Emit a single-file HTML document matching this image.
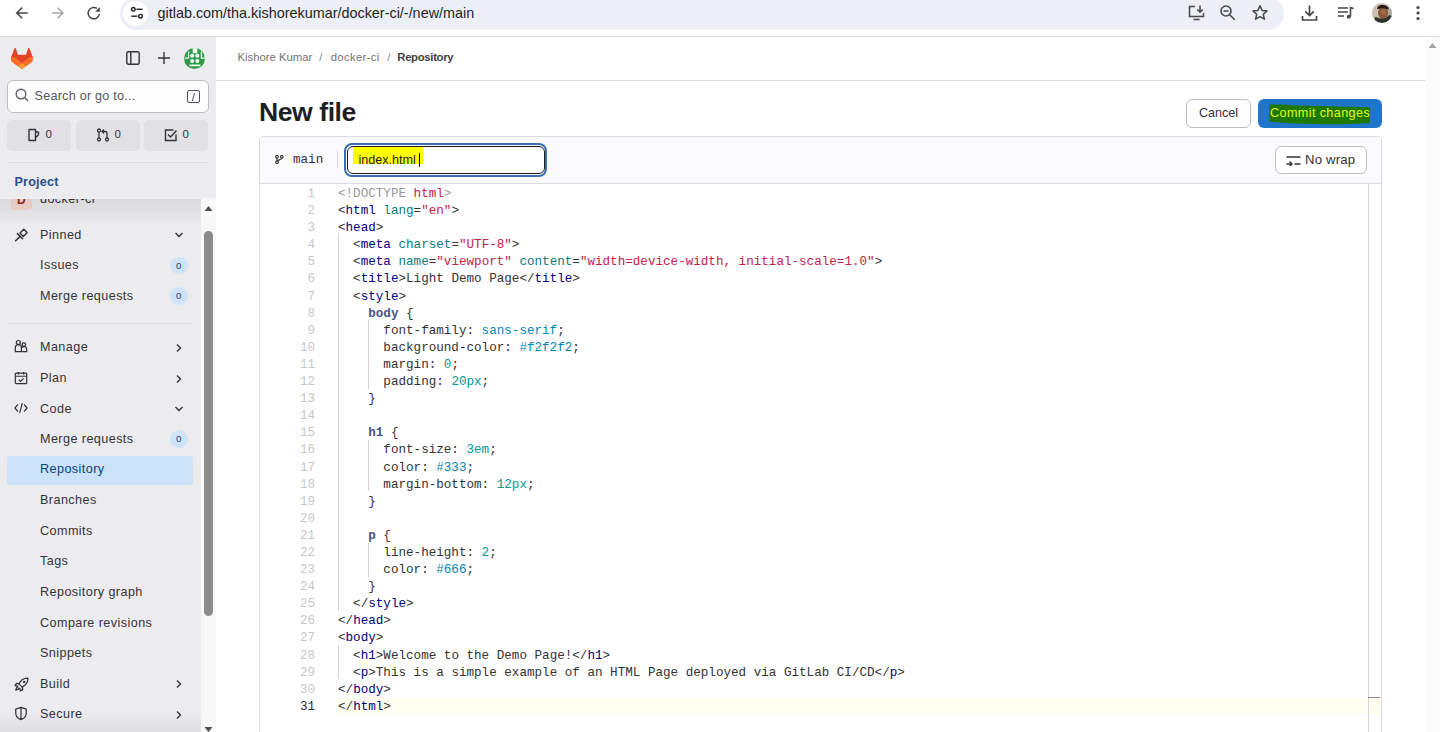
<!DOCTYPE html>
<html><head><meta charset="utf-8">
<style>
*{box-sizing:border-box;margin:0;padding:0}
html,body{width:1440px;height:732px;overflow:hidden;background:#fff;font-family:"Liberation Sans",sans-serif;color:#333238}
.a{position:absolute}
svg{display:block}
/* chrome */
#chrome{left:0;top:0;width:1440px;height:37px;background:#fff;border-bottom:1px solid #dadce0}
#omni{left:120px;top:-3px;width:1164px;height:33px;border-radius:16.5px;background:#eceff5}
#tune{left:123px;top:1px;width:25px;height:25px;border-radius:50%;background:#fff}
#url{left:157.5px;top:5px;font-size:14.4px;color:#1f1f1f;white-space:nowrap;line-height:17px}
/* sidebar */
#sb{left:0;top:37px;width:216px;height:695px;background:#ececef}
.cnt{top:120px;width:64px;height:30.5px;border-radius:5px;background:#e1e1e5}
.cnt span{position:absolute;left:38.5px;top:8px;font-size:11.5px;color:#333238}
.it{left:40px;font-size:12.6px;letter-spacing:.43px;color:#333238;white-space:nowrap;line-height:15px}
.bdg{left:170px;width:17.5px;height:17.5px;border-radius:9px;background:#cfe4f9;color:#2a3f66;font-size:9.8px;text-align:center;line-height:18px}
.chev{left:174px}
.ico{left:14px}
/* main */
#bc{left:237.5px;top:51px;font-size:11.3px;color:#737278;white-space:nowrap;line-height:13px}
#bc b{color:#434248;font-weight:bold}
#bc .sl{color:#89888d}
#hdrline{left:216px;top:80px;width:1209px;height:1px;background:#dcdcde}
#title{left:259px;top:96.5px;font-size:26.6px;font-weight:bold;color:#1f1e24;letter-spacing:-.45px;white-space:nowrap;line-height:30px}
.btn{height:28.5px;border-radius:6px;font-size:12.6px;white-space:nowrap}
#card{left:259px;top:136px;width:1123px;height:620px;border:1px solid #dcdcde;border-radius:4px;background:#fff}
#cardhdr{left:260px;top:137px;width:1121px;height:47px;background:#fbfafd;border-bottom:1px solid #dcdcde;border-radius:3px 3px 0 0}
.code{position:absolute;left:338px;font-family:"Liberation Mono",monospace;font-size:12.6px;white-space:pre;line-height:17.1px;color:#333}
.ln{position:absolute;left:270px;width:45px;text-align:right;font-family:"Liberation Mono",monospace;font-size:12.6px;line-height:17.1px;color:#c8c8c8}
.t{color:#000080}.n{color:#008080}.s{color:#c4214c}.p{color:#333}.m{color:#999}.c{color:#445588;font-weight:bold}.v{color:#0086b3}.num{color:#009999}
</style></head><body>

<!-- browser chrome -->
<div id="chrome" class="a"></div>
<div class="a" style="left:14px;top:5px">
<svg width="16" height="16" viewBox="0 0 16 16"><path d="M13.8 7.9H2.6M8.2 2.5 2.7 7.9l5.5 5.4" fill="none" stroke="#474747" stroke-width="1.5"/></svg></div>
<div class="a" style="left:49px;top:5px">
<svg width="16" height="16" viewBox="0 0 16 16"><path d="M3.2 7.9h10.7M8.7 2.7l5.2 5.2-5.2 5.3" fill="none" stroke="#a8a8a8" stroke-width="1.5"/></svg></div>
<div class="a" style="left:86px;top:5px"><svg width="16" height="16" viewBox="0 0 16 16"><path d="M13.4 9.2A5.7 5.7 0 1 1 11 3.4" fill="none" stroke="#474747" stroke-width="1.5"/><path d="M13.9 6.7V1.9L9.1 6.7z" fill="#474747"/></svg></div>
<div id="omni" class="a"></div>
<div id="tune" class="a"></div>
<div class="a" style="left:130px;top:6px">
<svg width="14" height="14" viewBox="0 0 14 14"><circle cx="3.3" cy="3.3" r="1.8" fill="none" stroke="#1f1f1f" stroke-width="1.4"/><path d="M6.5 3.3h6" stroke="#1f1f1f" stroke-width="1.4"/><circle cx="10.5" cy="10.2" r="1.8" fill="none" stroke="#1f1f1f" stroke-width="1.4"/><path d="M1.3 10.2h6" stroke="#1f1f1f" stroke-width="1.4"/></svg></div>
<div id="url" class="a">gitlab.com/tha.kishorekumar/docker-ci/-/new/main</div>
<!-- right chrome icons -->
<div class="a" style="left:1187px;top:4px">
<svg width="19" height="18" viewBox="0 0 19 18"><path d="M8 2.5H2.5v10h14V9" fill="none" stroke="#474747" stroke-width="1.5"/><path d="M6.5 15.5h6" stroke="#474747" stroke-width="1.6"/><path d="M13 1.5v6.5M10.3 5.5 13 8.2l2.7-2.7" fill="none" stroke="#474747" stroke-width="1.5"/></svg></div>
<div class="a" style="left:1219px;top:4px">
<svg width="18" height="18" viewBox="0 0 18 18"><circle cx="7" cy="7" r="5" fill="none" stroke="#474747" stroke-width="1.6"/><path d="M4.5 7h5M10.7 10.7l5 5" stroke="#474747" stroke-width="1.6"/></svg></div>
<div class="a" style="left:1251px;top:4px">
<svg width="18" height="18" viewBox="0 0 18 18"><path d="M9 1.8l2.1 4.6 5 .5-3.8 3.4 1.1 4.9L9 12.7l-4.4 2.5 1.1-4.9L1.9 6.9l5-.5z" fill="none" stroke="#474747" stroke-width="1.5" stroke-linejoin="round"/></svg></div>
<div class="a" style="left:1300px;top:4px">
<svg width="19" height="18" viewBox="0 0 19 18"><path d="M9.5 1.5v10M5.2 7.3l4.3 4.3 4.3-4.3M2.5 12v4h14v-4" fill="none" stroke="#474747" stroke-width="1.7"/></svg></div>
<div class="a" style="left:1337px;top:4px">
<svg width="18" height="18" viewBox="0 0 18 18"><path d="M1 4h10M1 8h10M1 12h6" stroke="#474747" stroke-width="1.6"/><path d="M13.5 12.5V3.5l3 1" fill="none" stroke="#474747" stroke-width="1.6"/><circle cx="11.8" cy="12.8" r="2" fill="#474747"/></svg></div>
<div class="a" style="left:1372px;top:3px;width:20px;height:20px;border-radius:50%;overflow:hidden;background:#c9c4be">
<svg width="20" height="20" viewBox="0 0 20 20"><rect width="20" height="20" fill="#d8d2cc"/><path d="M0 0h7v20H0z" fill="#cdbfb2"/><path d="M14 6h6v14h-6z" fill="#a9aca0"/><ellipse cx="11" cy="10" rx="5" ry="6.5" fill="#8a5a3a"/><path d="M5 5.5C6 2 9 1.5 12 2s4.5 2 5 4l-2 .5C13 5 9 5 6 6z" fill="#2a1c14"/><path d="M3 14c2 0 4 1 6 2l5-1 3-3 3 1v7H2z" fill="#2e3428"/><ellipse cx="11.5" cy="9" rx="2.5" ry="3" fill="#a06a44"/></svg></div>
<div class="a" style="left:1416px;top:5px">
<svg width="4" height="16" viewBox="0 0 4 16"><circle cx="2" cy="2.5" r="1.6" fill="#474747"/><circle cx="2" cy="8" r="1.6" fill="#474747"/><circle cx="2" cy="13.5" r="1.6" fill="#474747"/></svg></div>

<!-- sidebar -->
<div id="sb" class="a"></div>
<!-- sidebar scroll area items -->
<div class="a" style="left:10.5px;top:190px;width:21.5px;height:20px;border-radius:4px;background:#f6d9d3;color:#9e2a14;font-size:12px;font-weight:bold;text-align:center;line-height:20px">D</div>
<div class="it a" style="top:192px">docker-ci</div>

<div class="ico a" style="top:226px"><svg width="16" height="16" viewBox="0 0 16 16"><path d="M9.8 3.3 13.2 6.6 9.4 10.4 6 7z" fill="none" stroke="#333238" stroke-width="1.4" stroke-linejoin="round"/><path d="M3.4 7.6l5.2 5.2M6.2 10.4 1.6 14.8" fill="none" stroke="#333238" stroke-width="1.5" stroke-linecap="round"/></svg></div>
<div class="it a" style="top:228px">Pinned</div>
<div class="chev a" style="top:231px"><svg width="10" height="8" viewBox="0 0 10 8"><path d="M1.5 2 5 5.5 8.5 2" fill="none" stroke="#333238" stroke-width="1.4"/></svg></div>
<div class="it a" style="top:257.5px">Issues</div><div class="bdg a" style="top:256.5px">0</div>
<div class="it a" style="top:289px">Merge requests</div><div class="bdg a" style="top:287px">0</div>
<div class="a" style="left:7px;top:323px;width:186px;height:1px;background:#dcdcde"></div>

<div class="ico a" style="top:339px"><svg width="14" height="14" viewBox="0 0 16 16"><circle cx="5" cy="4" r="2.3" fill="none" stroke="#333238" stroke-width="1.4"/><circle cx="11.3" cy="6.3" r="2" fill="none" stroke="#333238" stroke-width="1.4"/><path d="M1.5 14.5V10a3.5 3.5 0 0 1 7 0v4.5zM8.5 14.5h6V11.5a3 3 0 0 0-5.5-1.5" fill="none" stroke="#333238" stroke-width="1.4"/></svg></div>
<div class="it a" style="top:339.5px">Manage</div>
<div class="chev a" style="top:343px"><svg width="8" height="10" viewBox="0 0 8 10"><path d="M3 1.5 6.5 5 3 8.5" fill="none" stroke="#333238" stroke-width="1.4"/></svg></div>

<div class="ico a" style="top:370.5px"><svg width="14" height="14" viewBox="0 0 16 16"><rect x="1.5" y="2.5" width="13" height="12" rx="1" fill="none" stroke="#333238" stroke-width="1.4"/><path d="M1.5 6h13M5 1v3M11 1v3M5.5 10l2 2 3.5-3.5" fill="none" stroke="#333238" stroke-width="1.4"/></svg></div>
<div class="it a" style="top:371px">Plan</div>
<div class="chev a" style="top:373.5px"><svg width="8" height="10" viewBox="0 0 8 10"><path d="M3 1.5 6.5 5 3 8.5" fill="none" stroke="#333238" stroke-width="1.4"/></svg></div>

<div class="ico a" style="top:401px"><svg width="14" height="14" viewBox="0 0 16 16"><path d="M4.5 4 1 8l3.5 4M11.5 4 15 8l-3.5 4M9.5 2.5l-3 11" fill="none" stroke="#333238" stroke-width="1.4"/></svg></div>
<div class="it a" style="top:401.5px">Code</div>
<div class="chev a" style="top:404.5px"><svg width="10" height="8" viewBox="0 0 10 8"><path d="M1.5 2 5 5.5 8.5 2" fill="none" stroke="#333238" stroke-width="1.4"/></svg></div>

<div class="it a" style="top:432px">Merge requests</div><div class="bdg a" style="top:430px">0</div>
<div class="a" style="left:7px;top:456px;width:186px;height:28.7px;border-radius:2.5px;background:#cbe2f9"></div>
<div class="it a" style="top:462px;color:#0b3e7a">Repository</div>
<div class="it a" style="top:493px">Branches</div>
<div class="it a" style="top:523.5px">Commits</div>
<div class="it a" style="top:553.5px">Tags</div>
<div class="it a" style="top:585px">Repository graph</div>
<div class="it a" style="top:616px">Compare revisions</div>
<div class="it a" style="top:646px">Snippets</div>

<div class="ico a" style="top:676.5px"><svg width="15" height="15" viewBox="0 0 16 16"><path d="M14.8 1.2C10.5 1 7.3 3.3 5.2 7.3l3.5 3.5c4-2.1 6.3-5.3 6.1-9.6z" fill="none" stroke="#333238" stroke-width="1.4" stroke-linejoin="round"/><path d="M5.4 7 2.6 6.8 1.2 9.2l3 .6M9 10.6l.2 2.8-2.4 1.4-.6-3" fill="none" stroke="#333238" stroke-width="1.4" stroke-linejoin="round"/><path d="M4.6 10.3c-1.3.3-2.3 1.4-2.6 3.7 2.3-.3 3.4-1.3 3.7-2.6" fill="none" stroke="#333238" stroke-width="1.4" stroke-linejoin="round"/><circle cx="10.8" cy="5.2" r="1.3" fill="#333238"/></svg></div>
<div class="it a" style="top:677px">Build</div>
<div class="chev a" style="top:679px"><svg width="8" height="10" viewBox="0 0 8 10"><path d="M3 1.5 6.5 5 3 8.5" fill="none" stroke="#333238" stroke-width="1.4"/></svg></div>
<div class="ico a" style="top:706px"><svg width="14" height="15" viewBox="0 0 16 17"><path d="M8 1.5 14 3.5V8c0 3.5-2.5 6.3-6 7.5C4.5 14.3 2 11.5 2 8V3.5zM8 1.5v14" fill="none" stroke="#333238" stroke-width="1.4" stroke-linejoin="round"/></svg></div>
<div class="it a" style="top:706.5px">Secure</div>
<div class="chev a" style="top:709.5px"><svg width="8" height="10" viewBox="0 0 8 10"><path d="M3 1.5 6.5 5 3 8.5" fill="none" stroke="#333238" stroke-width="1.4"/></svg></div>

<div class="a" style="left:0;top:712px;width:201px;height:20px;background:linear-gradient(rgba(0,0,0,0),rgba(0,0,0,.06))"></div>
<!-- sidebar scrollbar -->
<div class="a" style="left:201px;top:199px;width:15px;height:533px;background:#f8f8f8"></div>
<div class="a" style="left:204px;top:205px"><svg width="9" height="7" viewBox="0 0 9 7"><path d="M4.5 1 8.5 6h-8z" fill="#505050"/></svg></div>
<div class="a" style="left:204px;top:231px;width:9px;height:385px;border-radius:4.5px;background:#8b8b8b"></div>
<div class="a" style="left:204px;top:726px"><svg width="9" height="7" viewBox="0 0 9 7"><path d="M4.5 6 8.5 1h-8z" fill="#505050"/></svg></div>

<!-- sticky sidebar header -->
<div class="a" style="left:0;top:199px;width:201px;height:26px;background:linear-gradient(rgba(0,0,0,.075),rgba(0,0,0,.05) 45%,rgba(0,0,0,0))"></div>
<div class="a" style="left:0;top:37px;width:216px;height:162px;background:#ececef"></div>
<div class="a" style="left:11px;top:48px"><svg width="22" height="21" viewBox="0 0 25 24"><path fill="#E24329" d="m24.507 9.5-.034-.09L21.082.562a.896.896 0 0 0-1.694.091l-2.29 7.01H7.825L5.535.653a.898.898 0 0 0-1.694-.09L.451 9.411.416 9.5a6.297 6.297 0 0 0 2.09 7.278l.012.01.03.022 5.16 3.867 2.56 1.935 1.554 1.176a1.051 1.051 0 0 0 1.268 0l1.555-1.176 2.56-1.935 5.197-3.89.014-.01A6.297 6.297 0 0 0 24.507 9.5Z"/><path fill="#FC6D26" d="m24.507 9.5-.034-.09a11.44 11.44 0 0 0-4.56 2.051l-7.447 5.632 4.742 3.584 5.197-3.89.014-.01A6.297 6.297 0 0 0 24.507 9.5Z"/><path fill="#FCA326" d="m7.707 20.677 2.56 1.935 1.555 1.176a1.051 1.051 0 0 0 1.268 0l1.555-1.176 2.56-1.935-4.743-3.584-4.755 3.584Z"/><path fill="#FC6D26" d="M5.01 11.461a11.43 11.43 0 0 0-4.56-2.05L.416 9.5a6.297 6.297 0 0 0 2.09 7.278l.012.01.03.022 5.16 3.867 4.745-3.584-7.444-5.632Z"/></svg></div>
<div class="a" style="left:126px;top:51px"><svg width="14" height="14" viewBox="0 0 14 14"><rect x=".8" y=".8" width="12.4" height="12.4" rx="1.5" fill="none" stroke="#333238" stroke-width="1.4"/><path d="M4.8 1v12" stroke="#333238" stroke-width="1.4"/></svg></div>
<div class="a" style="left:157px;top:51px"><svg width="14" height="14" viewBox="0 0 14 14"><path d="M7 1v12M1 7h12" stroke="#333238" stroke-width="1.4"/></svg></div>
<div class="a" style="left:183.5px;top:47.5px;width:21.5px;height:21.5px;border-radius:50%;overflow:hidden;background:#fff">
<svg width="22" height="22" viewBox="0 0 22 22"><rect width="22" height="22" fill="#2f9b4a"/><path d="M8.7 0h4.6v5.2H8.7z" fill="#f2fbf2"/><path d="M3.9 3.4h1.3v7.4H1v-1.3h2.9z" fill="#f2fbf2"/><path d="M16.8 3.4h1.3v6.1H21v1.3h-4.2z" fill="#f2fbf2"/><circle cx="8.2" cy="7.8" r="2" fill="#f2fbf2"/><circle cx="13.3" cy="7.8" r="2" fill="#f2fbf2"/><circle cx="8.2" cy="12.9" r="2" fill="#f2fbf2"/><circle cx="13.3" cy="12.9" r="2" fill="#f2fbf2"/><path d="M5.4 16.4h11v1.9h-11z" fill="#f2fbf2"/></svg></div>
<div class="a" style="left:7px;top:80px;width:201.5px;height:32.5px;border-radius:6px;background:#fdfdfe;border:1px solid #bfbfc3"></div>
<div class="a" style="left:15px;top:88px"><svg width="14" height="14" viewBox="0 0 14 14"><circle cx="6" cy="6" r="4.8" fill="none" stroke="#626168" stroke-width="1.4"/><path d="M9.5 9.5 13 13" stroke="#626168" stroke-width="1.5"/></svg></div>
<div class="a" style="left:34.5px;top:89px;font-size:12.6px;letter-spacing:.25px;color:#57565c;white-space:nowrap;line-height:14px">Search or go to...</div>
<div class="a" style="left:187px;top:90px;width:12.5px;height:12.5px;border:1.3px solid #535158;border-radius:2px"></div>
<div class="a" style="left:192.5px;top:92.5px;width:1.3px;height:7.5px;background:#535158;transform:rotate(15deg)"></div>

<div class="cnt a" style="left:7px"><svg class="a" style="left:20px;top:7.5px" width="14" height="14" viewBox="0 0 14 14"><path d="M2 1.5h6.5v11H2zM8.5 3.5l3 .8v2.5l-3 3" fill="none" stroke="#333238" stroke-width="1.4" stroke-linejoin="round"/></svg><span>0</span></div>
<div class="cnt a" style="left:76px"><svg class="a" style="left:20px;top:7.5px" width="14" height="14" viewBox="0 0 14 14"><circle cx="3" cy="2.5" r="1.5" fill="none" stroke="#333238" stroke-width="1.3"/><circle cx="3" cy="11.5" r="1.5" fill="none" stroke="#333238" stroke-width="1.3"/><circle cx="11" cy="11.5" r="1.5" fill="none" stroke="#333238" stroke-width="1.3"/><path d="M3 4v6M11 10V5.5a2 2 0 0 0-2-2H6.5M8 1.5 6 3.5l2 2" fill="none" stroke="#333238" stroke-width="1.3"/></svg><span>0</span></div>
<div class="cnt a" style="left:144px"><svg class="a" style="left:20px;top:7.5px" width="14" height="14" viewBox="0 0 14 14"><path d="M12 6.5v6H1.5V2h8" fill="none" stroke="#333238" stroke-width="1.4"/><path d="M4 6.5l2.5 2.5 6-6.5" fill="none" stroke="#333238" stroke-width="1.4"/></svg><span>0</span></div>
<div class="a" style="left:7px;top:162px;width:201px;height:1px;background:#dcdcde"></div>
<div class="a" style="left:0;top:197px;width:216px;height:2px;background:#f0eff3"></div>
<div class="a" style="left:14.5px;top:175px;font-size:12.6px;font-weight:bold;color:#2a4f88;letter-spacing:.2px;line-height:14px">Project</div>

<!-- main -->
<div id="bc" class="a">Kishore Kumar<span class="sl" style="margin:0 8.3px 0 7px">/</span><span style="letter-spacing:.35px">docker-ci</span><span class="sl" style="margin:0 7px 0 7.5px">/</span><b style="letter-spacing:-.3px">Repository</b></div>
<div id="hdrline" class="a"></div>
<div id="title" class="a">New file</div>
<div class="btn a" style="left:1186px;top:99px;width:65px;border:1px solid #bfbfc3;background:#fff;color:#333238;text-align:center;line-height:26.5px">Cancel</div>
<div class="btn a" style="left:1258px;top:99px;width:124px;background:#1f75cb"></div>
<svg class="a" style="left:1268px;top:104px" width="104" height="22" viewBox="0 0 104 22"><path d="M1 .5C12 .3 22 1 32 1.5L102 3.3V19.3C90 19.5 75 20.5 55 20.3 35 20 20 19.5 1.5 17.5z" fill="#1f7800"/></svg>
<div class="a" style="left:1270px;top:106px;font-size:12.6px;letter-spacing:.4px;color:#dcff12;white-space:nowrap;line-height:14px">Commit changes</div>

<div id="card" class="a"></div>
<div id="cardhdr" class="a"></div>
<div class="a" style="left:274.5px;top:155px"><svg width="9" height="9" viewBox="0 0 9 9"><circle cx="2" cy="1.8" r="1.3" fill="none" stroke="#333238" stroke-width="1.1"/><circle cx="6.8" cy="1.8" r="1.3" fill="none" stroke="#333238" stroke-width="1.1"/><circle cx="2" cy="7.2" r="1.3" fill="none" stroke="#333238" stroke-width="1.1"/><path d="M2 3.1v2.8M6.8 3.1c0 2-4 1.5-4.6 2.9" fill="none" stroke="#333238" stroke-width="1.1"/></svg></div>
<div class="a" style="left:293px;top:152.5px;font-family:'Liberation Mono',monospace;font-size:12.6px;color:#333238;line-height:15px">main</div>
<div class="a" style="left:337px;top:150px;width:1px;height:18px;background:#dcdcde"></div>
<!-- input with focus ring -->
<div class="a" style="left:344px;top:143px;width:203px;height:34px;border-radius:8px;border:2px solid #3d6eb5;background:#fff"></div>
<div class="a" style="left:347px;top:146px;width:197.5px;height:28px;border-radius:6px;border:1px solid #1f1e24;background:#fff"></div>
<div class="a" style="left:352.5px;top:147px;width:70px;height:17px;background:#ffff00"></div>
<div class="a" style="left:358.5px;top:152.5px;font-size:12.6px;color:#1f1e24;line-height:14px;white-space:nowrap">index.html</div>
<div class="a" style="left:418.5px;top:153px;width:1.2px;height:13.5px;background:#000"></div>
<!-- no wrap -->
<div class="btn a" style="left:1275px;top:146px;width:92px;height:27.5px;border:1px solid #bfbfc3;background:#fff"></div>
<div class="a" style="left:1285.5px;top:156px"><svg width="15" height="10" viewBox="0 0 15 10"><path d="M.5 1h14M8.5 8h6M.5 8h5M3.5 5.5 6 8 3.5 10.5" fill="none" stroke="#333238" stroke-width="1.4"/></svg></div>
<div class="a" style="left:1305px;top:152.5px;font-size:13.2px;letter-spacing:.15px;color:#333238;line-height:14px;white-space:nowrap">No wrap</div>

<!-- current line highlight -->
<div class="a" style="left:337px;top:697.5px;width:1044px;height:16.5px;background:#fffef0"></div>
<!-- editor overview ruler -->
<div class="a" style="left:1368px;top:184px;width:1px;height:548px;background:#d6d6d6"></div>
<div class="a" style="left:1368px;top:696.5px;width:12px;height:1px;background:#8a8a8a"></div>
<!-- current line highlight -->


<!-- indent guides -->
<div class="a" style="left:338px;top:234px;width:1px;height:377px;background:#d3d3d3"></div>
<div class="a" style="left:368px;top:320px;width:1px;height:69px;background:#d3d3d3"></div>
<div class="a" style="left:368px;top:440px;width:1px;height:51px;background:#d3d3d3"></div>
<div class="a" style="left:368px;top:543px;width:1px;height:34px;background:#d3d3d3"></div>
<div class="a" style="left:338px;top:645px;width:1px;height:34px;background:#d3d3d3"></div>

<div id="lines" class="a" style="left:0;top:186px">
<div class="ln" style="top:0">1<br>2<br>3<br>4<br>5<br>6<br>7<br>8<br>9<br>10<br>11<br>12<br>13<br>14<br>15<br>16<br>17<br>18<br>19<br>20<br>21<br>22<br>23<br>24<br>25<br>26<br>27<br>28<br>29<br>30<br><span style="color:#2b2d42">31</span></div>
<div class="code" style="top:0"><span class="m">&lt;!DOCTYPE </span><span class="s">html</span><span class="m">&gt;</span>
<span class="p">&lt;</span><span class="t">html</span> <span class="n">lang</span>=<span class="s">"en"</span>&gt;
&lt;<span class="t">head</span>&gt;
  &lt;<span class="t">meta</span> <span class="n">charset</span>=<span class="s">"UTF-8"</span>&gt;
  &lt;<span class="t">meta</span> <span class="n">name</span>=<span class="s">"viewport"</span> <span class="n">content</span>=<span class="s">"width=device-width, initial-scale=1.0"</span>&gt;
  &lt;<span class="t">title</span>&gt;Light Demo Page&lt;/<span class="t">title</span>&gt;
  &lt;<span class="t">style</span>&gt;
    <span class="c">body</span> {
      font-family: <span class="v">sans-serif</span>;
      background-color: <span class="v">#f2f2f2</span>;
      margin: <span class="num">0</span>;
      padding: <span class="num">20px</span>;
    }

    <span class="c">h1</span> {
      font-size: <span class="num">3em</span>;
      color: <span class="v">#333</span>;
      margin-bottom: <span class="num">12px</span>;
    }

    <span class="c">p</span> {
      line-height: <span class="num">2</span>;
      color: <span class="v">#666</span>;
    }
  &lt;/<span class="t">style</span>&gt;
&lt;/<span class="t">head</span>&gt;
&lt;<span class="t">body</span>&gt;
  &lt;<span class="t">h1</span>&gt;Welcome to the Demo Page!&lt;/<span class="t">h1</span>&gt;
  &lt;<span class="t">p</span>&gt;This is a simple example of an HTML Page deployed via GitLab CI/CD&lt;/<span class="t">p</span>&gt;
&lt;/<span class="t">body</span>&gt;
&lt;/<span class="t">html</span>&gt;</div>
</div>

<!-- page scrollbar -->
<div class="a" style="left:1425px;top:37px;width:15px;height:695px;background:#fbfbfb"></div>
<div class="a" style="left:1428px;top:42px"><svg width="9" height="7" viewBox="0 0 9 7"><path d="M4.5 1 8.5 6h-8z" fill="#a3a3a3"/></svg></div>
</body></html>
